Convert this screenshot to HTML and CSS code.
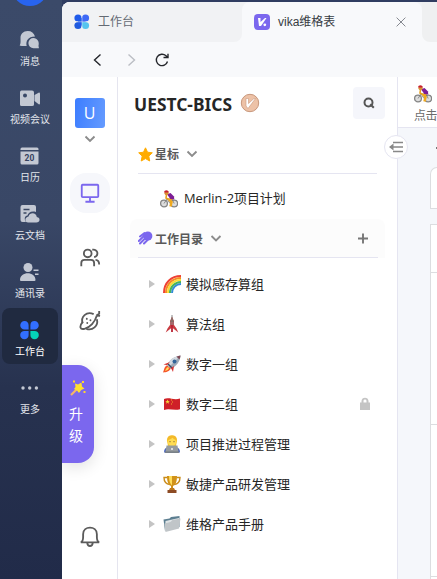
FILE: index.html
```html
<!DOCTYPE html>
<html lang="zh-CN">
<head>
<meta charset="utf-8">
<title>vika维格表</title>
<link rel="stylesheet" href="styles.css">
</head>
<body>
<svg class="defs" aria-hidden="true">
  <symbol id="cyclist" viewBox="0 0 18 18">
    <circle cx="4" cy="13.5" r="3.4" fill="#ddd" stroke="#858585" stroke-width="1.3"/>
    <circle cx="14.2" cy="13.5" r="3.4" fill="#ddd" stroke="#858585" stroke-width="1.3"/>
    <path d="M4 13.5 7 9l5 0 2.2 4.500M7 9l3 4.500" fill="none" stroke="#777" stroke-width=".8"/>
    <path d="M6.500 4.500 6 8l3 1.500" fill="none" stroke="#e8a11c" stroke-width="1.600"/>
    <path d="M12.500 8 9.500 10l2 2-1 4.500" fill="none" stroke="#efa91e" stroke-width="2.500"/>
    <path d="M7 4.200 10.500 3l3.500 3.500.3 3-4-.4z" fill="#7d1d95"/>
    <circle cx="6.500" cy="3.200" r="2" fill="#d99035"/>
    <path d="M4 2.600C4.200-.2 8.200-.5 9 2.500z" fill="#c71f2d"/>
  </symbol>
  <symbol id="chev" viewBox="0 0 12 8"><path d="m1.500 1.500 4.500 4.500 4.500-4.500" fill="none" stroke="#8c8c8c" stroke-width="1.900"/></symbol>
</svg>

<nav class="dock">
  <div class="avatar"></div>
  <div class="dock-item"><svg viewBox="0 0 22 20"><path d="M8.700 1C4.300 1 1.500 4 1.500 8c0 3 .5 5-.8 7.500.4.500 3 .500 7 .500C6.500 11 9 6.500 16 6.500 15 3 12.500 1 8.700 1z"/><path d="M14.500 8a5 5 0 1 0 0 10.200h5.300c.4-.5-.3-1.200-.3-2.400 1.200-4-1.200-7.800-5-7.800z"/></svg><span>消息</span></div>
  <div class="dock-item"><svg viewBox="0 0 22 20"><path fill-rule="evenodd" d="M2.500 2.500H13q2 0 2 2v12q0 1.500-2 1.500H2.500Q1 18 1 16.500V4.500q0-2 1.500-2zM6 5.500a2 2 0 1 0 0 4 2 2 0 0 0 0-4z"/><path d="m15.500 7 4.500-2.500q1 0 1 1v10q0 1-1 1L15.500 13z"/></svg><span>视频会议</span></div>
  <div class="dock-item"><svg viewBox="0 0 22 20"><path d="M3 1.500h15q1.500 0 1.500 1.500v1H1.500V3Q1.500 1.500 3 1.500zM1.500 5.500h18v11.500q0 1.500-1.500 1.500H3q-1.500 0-1.500-1.500z"/><text x="10.500" y="15.300">20</text></svg><span>日历</span></div>
  <div class="dock-item"><svg viewBox="0 0 22 20"><path d="M3.500 1H15q2 0 2 2v5C12 6.500 9.200 9 8.500 11.500 5.500 12 5 15 7 18H3.500q-2 0-2-2V3q0-2 2-2z"/><path d="M4.500 5.500h6M4.500 9h3" stroke="#3c4863" stroke-width="1.400"/><path d="M9.500 12.500c1-4.700 8-4.300 8.300.5 4 .5 3.500 5.500-.5 5.500H9.200c-4 0-3.600-5.500.3-6z"/></svg><span>云文档</span></div>
  <div class="dock-item"><svg viewBox="0 0 22 20"><circle cx="9" cy="5.500" r="4.500"/><path d="M1 18c0-9 15.500-9 15.500 0q0 1-1 1H2q-1 0-1-1zM14.500 7.500h5v1.500h-5zM16 11.500h3.500V13H16z"/></svg><span>通讯录</span></div>
  <div class="dock-item active"><svg viewBox="0 0 22 20"><path fill="#326fff" d="M5.500 1A4.300 4.300 0 0 1 9.600 5.200V9.500H5.500A4.200 4.200 0 0 1 5.500 1zM15.500 1A4.200 4.200 0 0 1 15.500 9.500H11.400V5.200A4.200 4.200 0 0 1 15.500 1zM5.500 10.900H9.600V15A4.200 4.200 0 1 1 5.500 10.900z"/><path fill="#05d3b8" d="M11.400 10.900H15.500A4.200 4.200 0 1 1 11.400 15z"/></svg><span>工作台</span></div>
  <div class="dock-item"><svg viewBox="0 0 22 20"><circle cx="4" cy="10" r="1.700"/><circle cx="10.700" cy="10" r="1.700"/><circle cx="17.400" cy="10" r="1.700"/></svg><span>更多</span></div>
</nav>

<main class="window">
  <header class="tabs">
    <div class="tab"><svg width="16" height="16" viewBox="0 0 16 16"><circle cx="4" cy="4" r="3.600" fill="#205bea"/><circle cx="11.500" cy="4" r="3.600" fill="#3e69f6"/><circle cx="4" cy="11.500" r="3.600" fill="#205bdd"/><circle cx="11.500" cy="11.500" r="3.600" fill="#55c4ee"/><path d="M4 4h4v4H4zM4 8h4v3.500H4z" fill="#205bea"/><path d="M8 4h3.500v4H8z" fill="#3e69f6"/><path d="M8 8h3.500v3.500H8z" fill="#55c4ee"/><path d="M8 0v16M0 7.800h16" stroke="#f1f2f4" stroke-width=".5"/></svg><span>工作台</span></div>
    <div class="tab current"><svg width="16" height="16" viewBox="0 0 16 16"><rect width="16" height="16" rx="4" fill="#7b67ee"/><path d="M4 4h2.500v4L11 4h1.500L7 12H5z" fill="#fff"/><circle cx="10.800" cy="10.800" r="1.400" fill="#fff"/></svg><span>vika维格表</span><svg class="close" width="10" height="10" viewBox="0 0 10 10"><path d="m.6.6 8.800 8.800M9.400.6.600 9.400" stroke="#85888f" stroke-width="1"/></svg></div>
    <div class="tab rest"></div>
  </header>
  <div class="toolbar">
    <svg viewBox="0 0 16 16"><path d="M10.500 2.500 4.500 8l6 5.500" stroke="#25272c" stroke-width="1.400"/></svg>
    <svg viewBox="0 0 16 16"><path d="m5.500 2.500 6 5.500-6 5.500" stroke="#bbbec4" stroke-width="1.400"/></svg>
    <svg viewBox="0 0 16 16"><path d="M13.500 9.500A5.700 5.700 0 1 1 12 3.800l1.700 1.700M9.500 5.500H14V1.700" stroke="#25272c" stroke-width="1.400"/></svg>
  </div>
  <div class="workspace">
    <aside class="rail">
      <div class="space">U</div>
      <svg class="down" width="12" height="8"><use href="#chev"/></svg>
      <div class="rail-item selected"><svg viewBox="0 0 24 24"><path d="M3 4q0-1 1-1h16q1 0 1 1v11.500q0 1-1 1H4q-1 0-1-1zM12 16.500v4.500M7 21.500h10"/></svg></div>
      <div class="rail-item people"><svg viewBox="0 0 24 24"><circle cx="9.500" cy="7" r="4.200"/><path d="M2.500 21v-3.500q0-3.500 3.500-3.500h7q3.500 0 3.500 3.500V21M14.500 3c7-1 7 7 2 8M18 14c3 .2 4 2 4 5"/></svg></div>
      <div class="rail-item planet"><svg viewBox="0 0 24 24"><path d="M16 4.500C8 1 1.500 7.500 4 14.500M19.500 10C21.500 17.500 14.500 23 8 20.500"/><path d="M4 13C0 18 1 21.500 6 20.500 12 19 17.500 13 19.500 6"/><path d="m19 6 3-2V1M19 6l4 .5"/><path d="M8.500 9.500v.2M9 14v.2M12.500 11v.2" stroke-width="2" stroke-linecap="round"/></svg></div>
      <div class="rail-item bell"><svg viewBox="0 0 24 24"><path d="M2 19c2-1 2.500-3 2.500-6v-3c0-9.500 15-9.500 15 0v3c0 3 .5 5 2.500 6zM9 19.500c.5 4.500 5.500 4.500 6 0"/></svg></div>
      <div class="upgrade"><svg width="18" height="18" viewBox="0 0 18 18"><path d="m2 16 6-6" stroke="#f5b767" stroke-width="2.200"/><path fill="#ffe12f" d="m6 4.500 3 1 3.500-2 .5 4 2.500 2-3.300 1.500L10 14 8 11.500 5 10l1.500-2z"/><path fill="#ffd62d" d="M4 1.500h2v2H4zM13 2h2v2h-2zM14.500 12h2v2h-2z"/></svg><span>升</span><span>级</span></div>
    </aside>
    <section class="catalog">
      <div class="title"><h1>UESTC-BICS</h1><svg width="20" height="20" viewBox="0 0 20 20"><circle cx="10" cy="10" r="8.700" fill="#edc2a7" stroke="#c7977c"/><path d="M6 5.500h2.500v5l5.500-5h1.500L8 15.500 6 13z" fill="#fff" stroke="#c9987e" stroke-width=".6"/></svg><button><svg width="12" height="12" viewBox="0 0 12 12"><circle cx="5.500" cy="5.500" r="4" fill="none" stroke="#565656" stroke-width="2"/><path d="m7.200 7.200 3.600 3.600" stroke="#565656" stroke-width="2"/></svg></button></div>
      <div class="group star"><svg width="15" height="15" viewBox="0 0 15 15"><path d="m7.500.8 2 4.400 4.800.6-3.500 3.300.9 4.900-4.200-2.400L3.200 14l1-4.900L.7 5.800l4.800-.6z" fill="#ffab00" stroke="#ffab00" stroke-linejoin="round"/></svg><b>星标</b><svg width="12" height="8"><use href="#chev"/></svg></div>
      <div class="favorite"><svg width="18" height="18"><use href="#cyclist"/></svg><span>Merlin-2项目计划</span></div>
      <div class="group directory"><svg width="15" height="15" viewBox="0 0 15 15"><circle cx="9.800" cy="5.500" r="4.600" fill="#7b67ee"/><path d="M6.500 2.500 2 6M7 4.500.8 10.500M8 7l-6 6M10.500 8.500 6 13" stroke="#7b67ee" stroke-width="2" stroke-linecap="round"/></svg><b>工作目录</b><svg width="12" height="8"><use href="#chev"/></svg><svg class="plus" width="12" height="12" viewBox="0 0 12 12"><path d="M6 1v10M1 6h10" stroke="#777" stroke-width="1.900"/></svg></div>
      <ul>
        <li><i></i><svg viewBox="0 0 18 18"><g fill="none" stroke-width="2"><path d="M1 18C1 8 8 1 18 1" stroke="#ee4135"/><path d="M3 18C3 9.500 9.500 3 18 3" stroke="#f68b24"/><path d="M5 18C5 10.500 10.500 5 18 5" stroke="#f8dd35"/><path d="M7 18C7 12 12 7 18 7" stroke="#46b45b"/><path d="M9 18c0-5 4-9 9-9" stroke="#328bd7"/></g></svg><span>模拟感存算组</span></li>
        <li><i></i><svg viewBox="0 0 18 18"><path d="M9 0v3" stroke="#888"/><path d="m9 2 2 4v4l2.500 3.500 1.800 4-3.800-3-2.500-2-2.500 2-3.800 3 1.800-4L7 10V6z" fill="#c83b40"/><path d="m9 1.500 2 5.500H7z" fill="#856e67"/><path d="M7 7h4v3H7z" fill="#a9686a"/><path d="M9 10v7" stroke="#b92434" stroke-width="1.800"/></svg><span>算法组</span></li>
        <li><i></i><svg viewBox="0 0 18 18"><path d="M5 10c-4 1-3.500 4.500-5 7.500 3-.5 6.500-.5 8-4.500z" fill="#f5552a"/><path d="M5 12c-2 .5-2 2.500-3 4 2-.5 3.500-1 4-3z" fill="#ffe05a"/><path d="M4 10C7 4.500 11 1.500 17.500.5 17 7 13.500 11 8 14z" fill="#9eabb8"/><path d="M4 10C7 4.500 11 1.500 17.500.5L6 12z" fill="#d3dae0"/><path d="M13.500 1.800c1.500-.8 2.500-1 4-1.300-.2 1.700-.5 2.700-1 4z" fill="#7d4a55"/><circle cx="11.500" cy="6.500" r="2" fill="#32669a"/><path d="m5 9 4 4" stroke="#394b62" stroke-width="1.500"/><path d="M7 7 .5 9.500 4 10zM11 11l-1 6-2-4z" fill="#d53330"/></svg><span>数字一组</span></li>
        <li><i></i><svg viewBox="0 0 18 18"><path d="M1 4c5-2 10 1.500 16-.5v10.800C11 16 6 13 1 15z" fill="#cf2028"/><path d="m4.500 4.500.7 1.500 1.600.1-1.200 1 .4 1.600-1.500-.9-1.400.9.400-1.600-1.200-1 1.600-.1z" fill="#f3cf38"/><path d="M8 4.500h1v1H8zM9 6.500h1v1H9zM8 8.500h1v1H8z" fill="#efac2b"/></svg><span>数字二组</span><svg class="lock" viewBox="0 0 12 14"><path d="M1 5.500h1.500V4c0-4.500 7-4.500 7 0v1.500H11V13H1zm3.500 0h3V4c0-2-3-2-3 0z" fill="#c4c4c4"/></svg></li>
        <li><i></i><svg viewBox="0 0 18 18"><path d="M1 17.500q0-5 4-5h8q4 0 4 5z" fill="#4a66bd"/><path d="M4 6C3-1.500 15-1.500 14 6l-1 5H5z" fill="#f8c72f"/><ellipse cx="9" cy="7" rx="4" ry="4.300" fill="#ffdc54"/><path d="M4.500 5c2-.2 4-1 5-2.500 1 1.500 2 2 4 2.500 0-4-2-4.500-4.500-4.500S4.500 1 4.500 5z" fill="#f3b92a"/><path d="M7 6.200v1M11 6.200v1" stroke="#6b4e25"/><path d="M3.500 10.500h11l1 7h-13z" fill="#969b9f"/><path d="M2 16.500h14v1.300H2z" fill="#71787c"/><circle cx="9" cy="14" r="1" fill="#f2f2f2"/></svg><span>项目推进过程管理</span></li>
        <li><i></i><svg viewBox="0 0 18 18"><path d="M4.500 2.500H1c0 4 2 6.500 6 7M13.500 2.500H17c0 4-2 6.500-6 7" fill="none" stroke="#c98b1a" stroke-width="1.400"/><path d="M4 1h10c0 6-1.500 9-4 10v3H8v-3C5.500 10 4 7 4 1z" fill="#d19219"/><path d="M6 1h3v9.500C7 9 6 6 6 1z" fill="#ffdd59"/><path d="M7 13h4l1 2H6z" fill="#bd791c"/><path d="M4.500 15h9v3h-9z" fill="#8d4b24"/></svg><span>敏捷产品研发管理</span></li>
        <li><i></i><svg viewBox="0 0 18 18"><path d="m.5 4.500 6-1L8 2l8.500-1v11L2 16z" fill="#5d7f91"/><path d="m2.500 6 13.500-3v9L2 16z" fill="#dfe4e6"/><path d="m1.500 8.500 6-1.500 2-2 8-1.500-1.500 10L2.500 17z" fill="#c0c5c8"/></svg><span>维格产品手册</span></li>
      </ul>
    </section>
    <section class="content">
      <div class="collapse"><svg width="14" height="12" viewBox="0 0 14 12"><path d="M4 1.500h10M1 6h13M4 10.500h10" stroke="#888" stroke-width="1.500"/><path d="M4.500 2.500v7L0 6z" fill="#888"/></svg></div>
      <div class="doc-head"><svg width="18" height="18"><use href="#cyclist"/></svg><span>点击</span></div>
      <div class="strip"><span></span></div>
      <div class="card"></div>
      <div class="grid"><div></div><div></div><div></div></div>
    </section>
  </div>
</main>
</body>
</html>
```
FILE: styles.css
```css
* { box-sizing: border-box; }
body {
  margin: 0;
  width: 437px;
  height: 579px;
  overflow: hidden;
  display: flex;
  background: #303d61;
  font-family: "Liberation Sans", "Noto Sans CJK SC", sans-serif;
  color: #262626;
}
.defs { position: absolute; width: 0; height: 0; }
svg { display: block; flex: none; }

.dock { width: 62px; flex: none; display: flex; flex-direction: column; gap: 2px; padding: 0 4px 0 2px; background: linear-gradient(180deg, #3b4a69 0, #394766 38%, #27324f 67%, #212b49 100%); }
.avatar { width: 36px; height: 36px; margin: -30px 0 10px 10px; flex: none; border-radius: 50%; background: #2864ef; }
.dock-item { height: 56px; flex: none; border-radius: 8px; display: flex; flex-direction: column; align-items: center; padding-top: 12px; gap: 3px; color: #e3e6ec; font: 10px/16px "Noto Sans CJK SC", sans-serif; white-space: nowrap; }
.dock-item svg { width: 22px; height: 20px; fill: #c3c8d3; }
.dock-item text { font: bold 8.5px Roboto, sans-serif; text-anchor: middle; fill: #36425e; }
.dock-item.active { background: #202a40; color: #fff; }

.window { flex: 1; min-width: 0; margin-top: 2px; border-top-left-radius: 8px; overflow: hidden; display: flex; flex-direction: column; background: #f8f9fb; }
.tabs { height: 40px; flex: none; display: flex; background: linear-gradient(#f1f2f4 50%, #f8f9fb 50%); font: 12px/20px "Liberation Sans", "Noto Sans CJK SC", sans-serif; }
.tab { width: 180px; flex: none; display: flex; align-items: center; gap: 8px; padding-left: 12px; background: #f1f2f4; color: #646a73; border-bottom-right-radius: 8px; }
.tab.current { background: #f8f9fb; color: #373c43; padding-right: 16px; border-radius: 8px 8px 0 0; }
.tab .close { margin-left: auto; }
.tab.rest { border-radius: 0 0 0 8px; background: #eff0f1; }
.toolbar { height: 35px; flex: none; display: flex; align-items: center; gap: 16px; padding-left: 28px; }
.toolbar svg { width: 16px; height: 16px; fill: none; }
.toolbar svg + svg { margin-left: 1px; }
.toolbar svg:last-child { margin-left: -1px; }

.workspace { flex: 1; display: flex; min-height: 0; background: #fff; }
.rail { position: relative; width: 56px; flex: none; border-right: 1px solid #e5e5ef; display: flex; flex-direction: column; align-items: center; padding-top: 21px; }
.space { width: 30px; height: 30px; border-radius: 3px; background: linear-gradient(100deg, #3c7dff, #659bff); color: #fff; display: flex; align-items: center; justify-content: center; font: 16px "Open Sans", sans-serif; }
.down { margin-top: 7px; }
.rail-item { width: 40px; height: 40px; display: flex; align-items: center; justify-content: center; flex: none; }
.rail-item svg { width: 22px; height: 22px; fill: none; stroke: #5b5b5b; stroke-width: 2; }
.selected { margin-top: 30px; border-radius: 16px; background: #f6f7fb; }
.selected svg { stroke: #7b67ee; }
.people { margin-top: 25px; }
.planet { margin-top: 23px; }
.bell { margin-top: auto; margin-bottom: 23px; }
.upgrade { position: absolute; left: 0; top: 288px; width: 32px; height: 98px; border-radius: 0 16px 16px 0; background: #7b67ee; color: #fff; display: flex; flex-direction: column; align-items: center; padding: 14px 3px 0 0; font: 14px/22px "Noto Sans CJK SC", sans-serif; box-shadow: 0 4px 16px rgb(0 0 0 / 12%); }
.upgrade svg { width: 18px; height: 18px; margin: 0 0 5px 3px; }
.rail .upgrade span { margin-left: -1px; }

.catalog { width: 279px; flex: none; display: flex; flex-direction: column; }
.title { display: flex; align-items: center; height: 32px; margin: 10px 12px 0 16px; }
h1 { margin: 1px 0 0; font: 700 17.4px/24px "Noto Sans", sans-serif; width: 100px; white-space: nowrap; }
.title > svg { margin-left: 6px; }
button { margin-left: auto; width: 32px; height: 32px; border: 0; border-radius: 4px; background: #f5f6fb; padding: 0; display: grid; place-items: center; }
.group { display: flex; align-items: center; height: 39px; margin: 16px 20px 0; border-bottom: 1px solid #e5e5f1; font: 12px/20px "Noto Sans CJK SC", sans-serif; color: #595959; }
.group b { margin: 0 7px 0 2px; font-weight: 700; }
.favorite { display: flex; align-items: center; height: 40px; margin: 5px 0 0 42px; gap: 6px; font: 12.9px/20px "Open Sans", "Noto Sans CJK SC", sans-serif; }
.favorite span { margin-top: -2px; }
.group.directory { height: 39px; margin: 0 12px; padding: 0 8px; border: 0; border-radius: 8px 8px 0 0; background: linear-gradient(#e5e5f1, #e5e5f1) 8px 100% / 240px 1px no-repeat, #fcfcfc; }
.directory b, .directory svg { transform: translateY(-.5px); }
.plus { margin-left: auto; margin-right: 8px; }
ul { list-style: none; margin: 6px 0 0; padding: 0; }
li { display: flex; align-items: center; height: 40px; padding-left: 31px; font: 13px/20px "Noto Sans CJK SC", sans-serif; }
li i { border-left: 6px solid #c4c4c4; border-top: 4px solid transparent; border-bottom: 4px solid transparent; margin-right: 8px; }
li svg { width: 18px; height: 18px; margin-right: 5px; }
li .lock { width: 12px; height: 14px; margin: 0 26px 0 auto; }

.content { position: relative; flex: 1; min-width: 0; border-left: 1px solid #e5e5f1; background: #f5f7fb; display: flex; flex-direction: column; }
.collapse { position: absolute; left: -14px; top: 58px; width: 24px; height: 24px; border: 1px solid #e5e5f1; border-radius: 50%; background: #fff; display: grid; place-items: center; }
.doc-head { height: 51px; flex: none; border-bottom: 1px solid #e5e5f1; background: #fff; padding: 8px 0 0 16px; overflow: hidden; white-space: nowrap; color: #6b6b6b; font: 12px/18px "Noto Sans CJK SC", sans-serif; }
.doc-head svg { margin-bottom: 3px; }
.doc-head span { letter-spacing: -.5px; }
.strip { height: 39px; flex: none; display: flex; justify-content: flex-end; padding-top: 19px; }
.strip span { width: 1px; height: 2px; background: #777; }
.card { height: 42px; flex: none; margin-left: 32px; border: solid #dcdde0; border-width: 1px 0 1px 1px; border-top-left-radius: 8px; background: #fff; }
.grid { flex: 1; margin: 15px 0 0 32px; border-left: 1px solid #dcdde0; border-top: 1px solid #dcdde0; background: #fff; }
.grid div { height: 152px; border-bottom: 1px solid #dcdde0; }
.grid div:first-child { height: 48px; }
```
